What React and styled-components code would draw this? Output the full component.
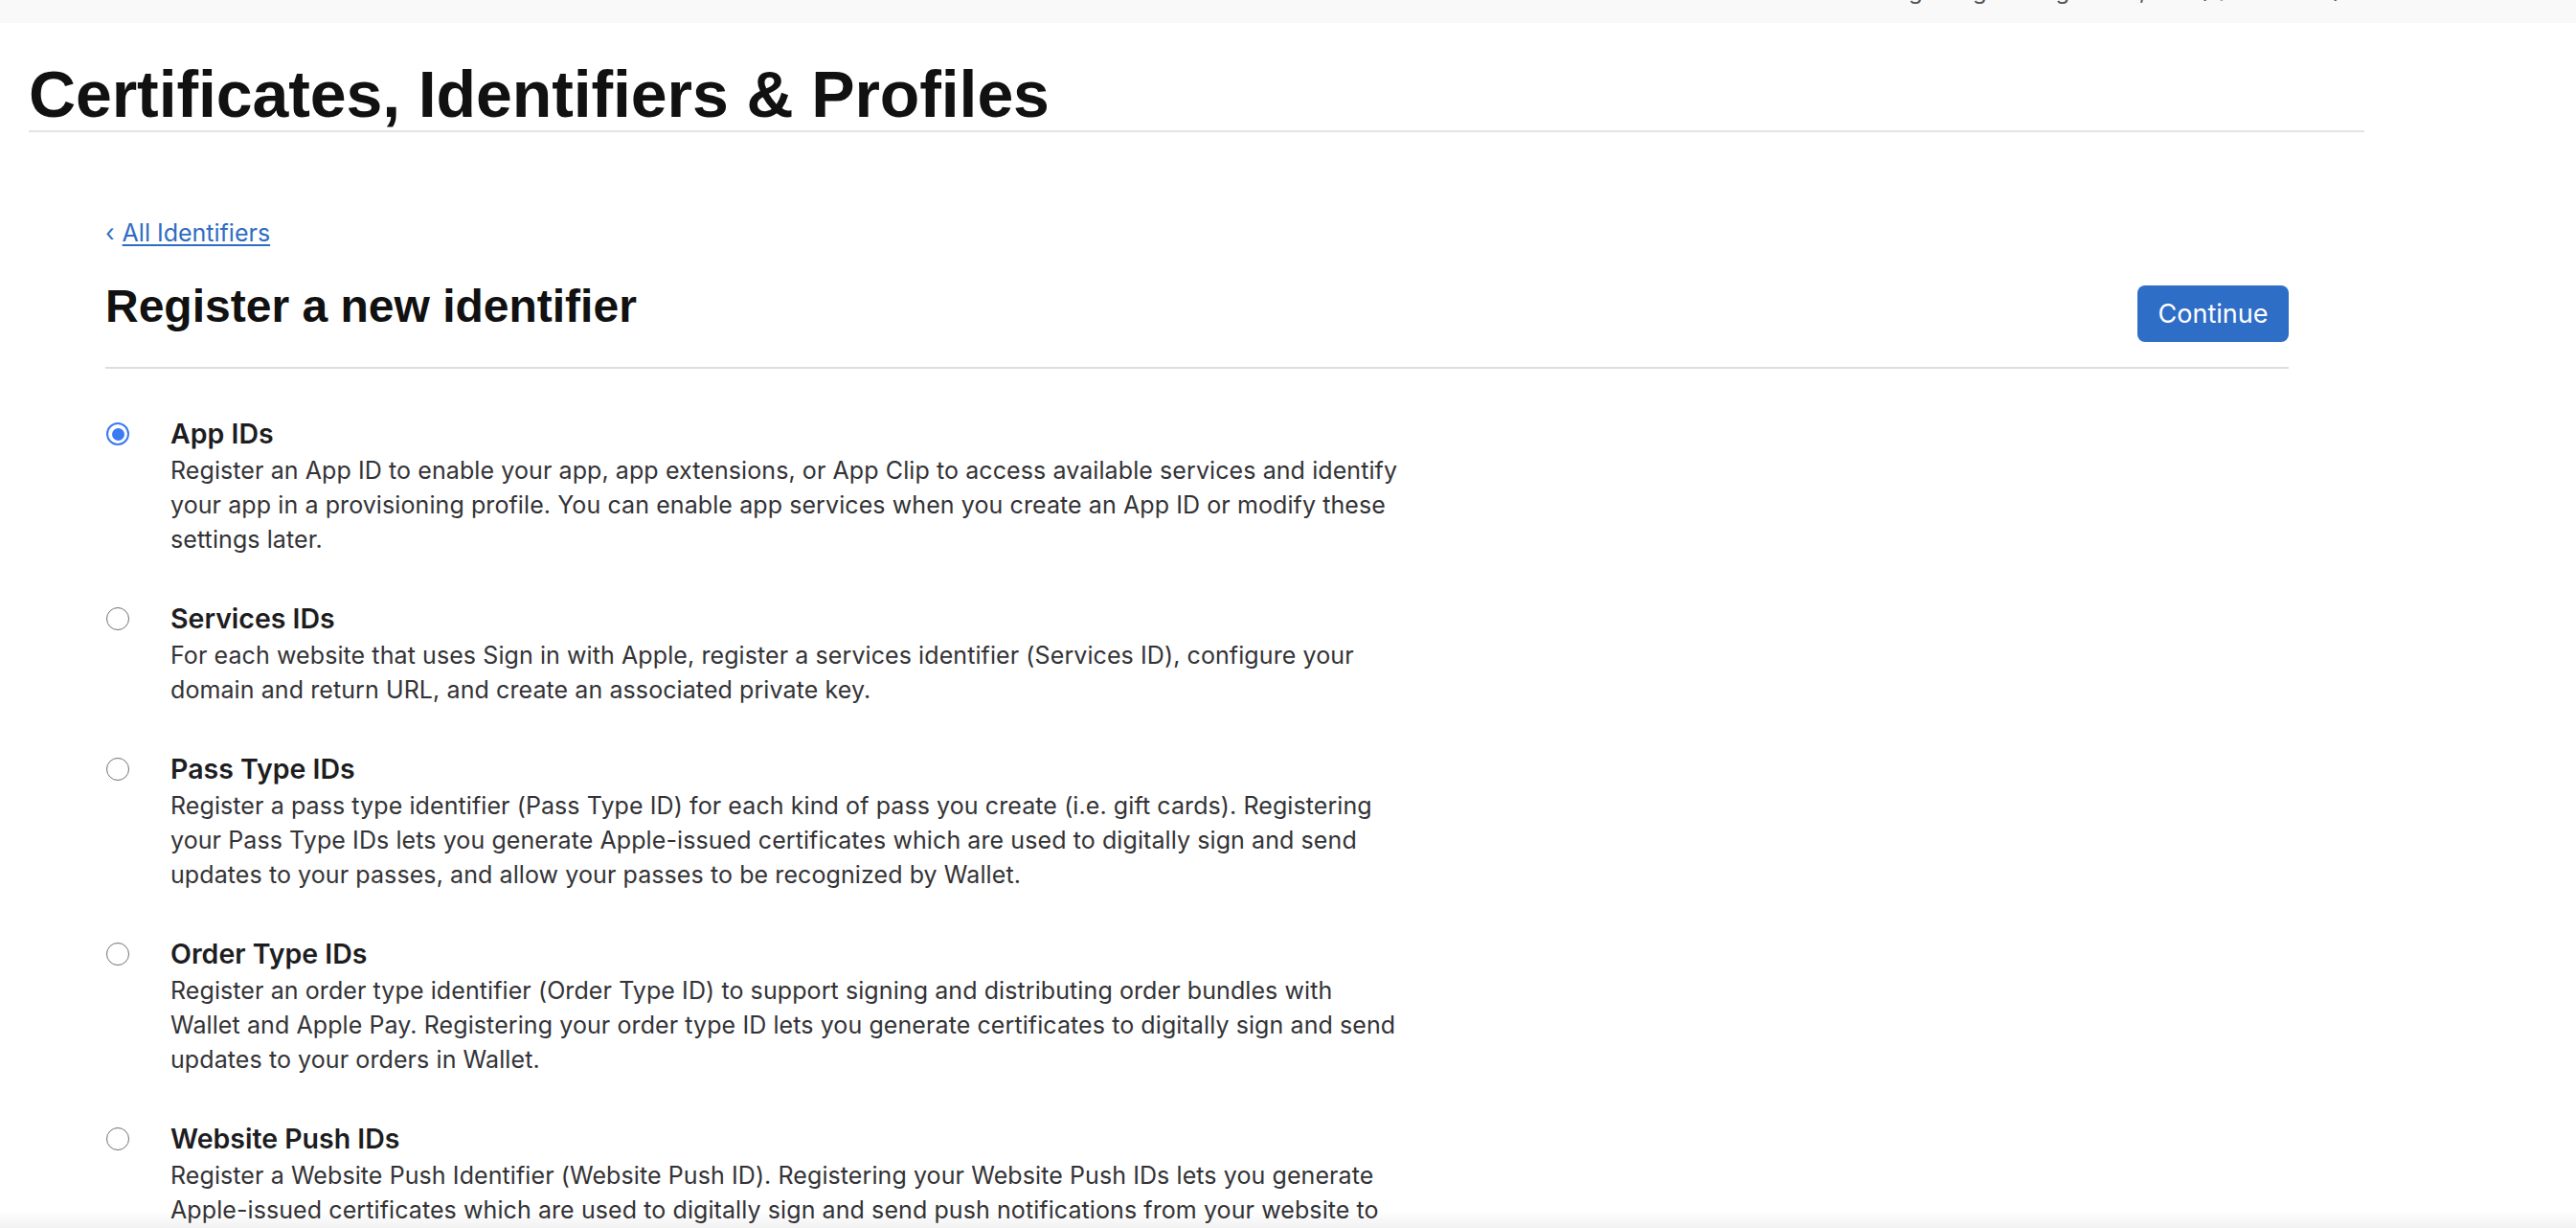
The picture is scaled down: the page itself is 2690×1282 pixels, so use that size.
import React from "react";
import styled, { createGlobalStyle } from "styled-components";

const GlobalStyle = createGlobalStyle`
  html, body {
    margin: 0;
    padding: 0;
    background: #ffffff;
    font-family: Inter, "Liberation Sans", Arial, sans-serif;
    color: #1d1d1f;
  }
  * { box-sizing: border-box; }
`;

const Page = styled.div`
  width: 100%;
  min-height: 100vh;
  background: #ffffff;
`;

const TopBar = styled.div`
  height: 24px;
  background: #f9f9f9;
  overflow: hidden;
  display: flex;
  justify-content: flex-end;
  align-items: flex-end;
  padding-right: 245px;
`;

const AccountName = styled.span`
  font-size: 24px;
  line-height: 24px;
  color: #555;
  transform: translateY(-21px);
  white-space: nowrap;
`;

const Header = styled.header`
  margin-left: 30px;
  width: 2439px;
  padding-top: 40px;
  padding-bottom: 4px;
  border-bottom: 2px solid #e4e4e4;
`;

const PageTitle = styled.h1`
  margin: 0;
  font-family: "Liberation Sans", Arial, sans-serif;
  font-weight: 700;
  font-size: 68px;
  line-height: 68px;
  letter-spacing: -0.1px;
  color: #111;
`;

const Content = styled.main`
  margin-left: 110px;
  width: 2280px;
  padding-top: 90px;
`;

const BackLink = styled.a`
  display: inline-flex;
  align-items: baseline;
  gap: 8px;
  font-size: 25px;
  line-height: 30px;
  color: #2e6dc2;
  text-decoration: none;
  cursor: pointer;
`;

const Chevron = styled.span`
  font-size: 25px;
  color: #2e6dc2;
`;

const LinkText = styled.span`
  text-decoration: underline;
  text-decoration-thickness: 2px;
  text-underline-offset: 3px;
`;

const TitleRow = styled.div`
  margin-top: 33px;
  display: flex;
  justify-content: space-between;
  align-items: flex-start;
  padding-bottom: 26px;
  border-bottom: 2px solid #dddddd;
`;

const SectionTitle = styled.h2`
  margin: 0;
  font-family: "Liberation Sans", Arial, sans-serif;
  font-weight: 700;
  font-size: 48px;
  line-height: 58px;
  color: #111;
`;

const PrimaryButton = styled.button`
  margin-top: 7px;
  height: 59px;
  width: 158px;
  border: none;
  border-radius: 8px;
  background: #2f6ec6;
  color: #fff;
  font-family: Inter, "Liberation Sans", Arial, sans-serif;
  font-size: 27px;
  font-weight: 400;
  cursor: pointer;
`;

const OptionList = styled.div`
  display: flex;
  flex-direction: column;
  gap: 45px;
  padding-top: 48px;
  padding-bottom: 60px;
`;

const Option = styled.label`
  display: grid;
  grid-template-columns: 24px 1fr;
  column-gap: 43px;
  padding-left: 1px;
  cursor: pointer;
`;

const Radio = styled.span`
  margin-top: 8px;
  width: 24px;
  height: 24px;
  border-radius: 50%;
  border: ${(p) => (p.$checked ? "2px solid #3a7af3" : "1.6px solid #707070")};
  background: #fff;
  display: flex;
  align-items: center;
  justify-content: center;
  &::after {
    content: "";
    display: ${(p) => (p.$checked ? "block" : "none")};
    width: 13px;
    height: 13px;
    border-radius: 50%;
    background: #3a7af3;
  }
`;

const OptionBody = styled.div`
  max-width: 1288px;
`;

const OptionTitle = styled.div`
  font-size: 28.5px;
  line-height: 40px;
  font-weight: 600;
  color: #1d1d1f;
`;

const OptionText = styled.p`
  margin: 0;
  font-size: 25px;
  line-height: 36px;
  letter-spacing: 0.09px;
  color: #333336;
`;

const BottomShade = styled.div`
  position: fixed;
  left: 0;
  right: 0;
  bottom: 0;
  height: 18px;
  background: linear-gradient(to bottom, rgba(0, 0, 0, 0), rgba(0, 0, 0, 0.05));
  pointer-events: none;
`;

const options = [
  {
    title: "App IDs",
    text:
      "Register an App ID to enable your app, app extensions, or App Clip to access available services and identify your app in a provisioning profile. You can enable app services when you create an App ID or modify these settings later.",
  },
  {
    title: "Services IDs",
    text:
      "For each website that uses Sign in with Apple, register a services identifier (Services ID), configure your domain and return URL, and create an associated private key.",
  },
  {
    title: "Pass Type IDs",
    text:
      "Register a pass type identifier (Pass Type ID) for each kind of pass you create (i.e. gift cards). Registering your Pass Type IDs lets you generate Apple-issued certificates which are used to digitally sign and send updates to your passes, and allow your passes to be recognized by Wallet.",
  },
  {
    title: "Order Type IDs",
    text:
      "Register an order type identifier (Order Type ID) to support signing and distributing order bundles with Wallet and Apple Pay. Registering your order type ID lets you generate certificates to digitally sign and send updates to your orders in Wallet.",
  },
  {
    title: "Website Push IDs",
    text:
      "Register a Website Push Identifier (Website Push ID). Registering your Website Push IDs lets you generate Apple-issued certificates which are used to digitally sign and send push notifications from your website to macOS.",
  },
  {
    title: "iCloud Containers",
    text:
      "Registering your iCloud Container lets you use the iCloud Storage APIs to enable your apps to store data and documents in iCloud, keeping your apps up to date automatically.",
  },
];

export default function App() {
  const [selected, setSelected] = React.useState(0);
  return (
    <Page>
      <GlobalStyle />
      <TopBar>
        <AccountName>Yang Gang - Jiangsu Co., Ltd. (Q7X9K2M4)</AccountName>
      </TopBar>
      <Header>
        <PageTitle>Certificates, Identifiers &amp; Profiles</PageTitle>
      </Header>
      <Content>
        <BackLink>
          <Chevron>‹</Chevron>
          <LinkText>All Identifiers</LinkText>
        </BackLink>
        <TitleRow>
          <SectionTitle>Register a new identifier</SectionTitle>
          <PrimaryButton>Continue</PrimaryButton>
        </TitleRow>
        <OptionList>
          {options.map((o, i) => (
            <Option key={o.title} onClick={() => setSelected(i)}>
              <Radio $checked={selected === i} />
              <OptionBody>
                <OptionTitle>{o.title}</OptionTitle>
                <OptionText>{o.text}</OptionText>
              </OptionBody>
            </Option>
          ))}
        </OptionList>
      </Content>
      <BottomShade />
    </Page>
  );
}
